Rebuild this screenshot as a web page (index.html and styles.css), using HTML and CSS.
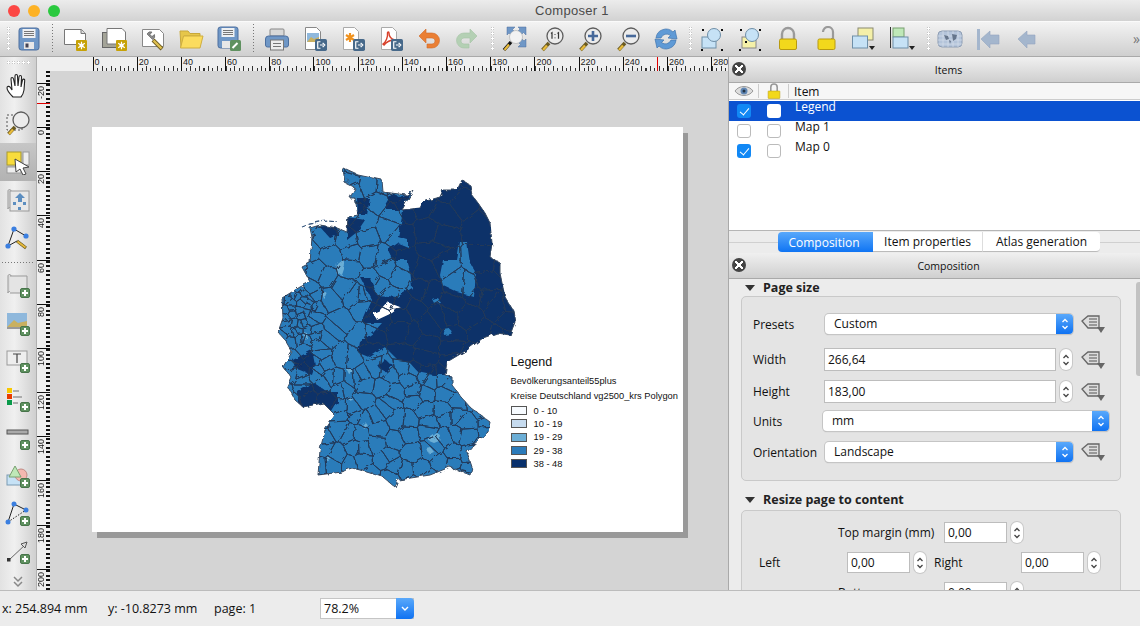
FILE: index.html
```html
<!DOCTYPE html>
<html lang="en">
<head>
  <meta charset="UTF-8">
  <title>Composer 1</title>
  <link rel="stylesheet" href="styles.css">
</head>
<body>

  <svg class="defs" width="0" height="0">
    <defs>
      <symbol id="plus" viewBox="0 0 10 10"><rect x=".5" y=".5" width="9" height="9" rx="1.5" fill="#5f9160" stroke="#47744a"/><path d="M5 2v6M2 5h6" stroke="#fff" stroke-width="2"/></symbol>
      <symbol id="gold" viewBox="0 0 10 10"><rect width="10" height="10" rx="1" fill="#c7a206"/><path d="M5 1.5v7M2 3l6 4M8 3L2 7" stroke="#fff" stroke-width="1.1"/><circle cx="5" cy="5" r="1.8" fill="#fff"/></symbol>
      <symbol id="export" viewBox="0 0 11 11"><rect width="11" height="11" rx="1.5" fill="#47698a"/><path d="M5 2.5H2.5v6H5M4.5 5.5h3M7 3.5l2 2-2 2" fill="none" stroke="#fff" stroke-width="1.1"/></symbol>
      <symbol id="mag" viewBox="0 0 26 26"><path d="M10 17L3.500 24" stroke="#6a5a20" stroke-width="3.600"/><path d="M8 19.500L4 24" stroke="#e8bb3c" stroke-width="2.400"/><circle cx="16" cy="10" r="8" fill="#ececec" stroke="#5d5d5d" stroke-width="1.300"/></symbol>
      <symbol id="lock" viewBox="0 0 26 26"><path d="M7 13V8a6 6 0 0 1 12 0v5" fill="none" stroke="#9a9a9a" stroke-width="2.400"/><rect x="4.500" y="13" width="17" height="10.500" rx="1.500" fill="#f2d81c" stroke="#b89a10"/></symbol>
      <symbol id="ddef" viewBox="0 0 26 22"><path d="M2 8l6-5h11v12H8z" fill="#ddd" stroke="#666" stroke-width="1.300"/><path d="M9 6h8M9 9h8M9 12h8" stroke="#555"/><path d="M17 14h8l-4 6z" fill="#666"/></symbol>
      <symbol id="updown" viewBox="0 0 12 20"><path d="M3.500 8L6 5.500 8.500 8M3.500 12L6 14.500 8.500 12" fill="none" stroke="currentColor" stroke-width="1.300"/></symbol>
    </defs>
  </svg>

  <div class="titlebar">
    <span class="light red"></span><span class="light amber"></span><span class="light green"></span>
    <span class="title">Composer 1</span>
  </div>

  <div class="toolbar">
    <span class="grip first"></span>
    <span class="tool"><svg class="ico" viewBox="0 0 26 26"><rect x="3" y="2" width="20" height="22" rx="2.500" fill="#6f97c6" stroke="#4c6f9f"/><rect x="6.500" y="3" width="13" height="9" fill="#eef0f2"/><path d="M8 5.500h10M8 7.500h10M8 9.500h10" stroke="#777"/><rect x="8" y="16" width="10" height="7" fill="#e8e8e8"/><rect x="9.500" y="17.500" width="3" height="4" fill="#445"/></svg></span>
    <span class="sep"></span>
    <span class="tool"><svg class="ico" viewBox="0 0 26 26"><path d="M2.500 3.500h17l4 4v11h-21z" fill="#fff" stroke="#777"/><path d="M19 3.500v4h4.500" fill="#ddd" stroke="#777"/><use href="#gold" x="14" y="14" width="11" height="11"/></svg></span>
    <span class="tool tool-dup"><svg class="ico" viewBox="0 0 26 26"><rect x="0.500" y="6.500" width="18" height="15" fill="#a4a498" stroke="#666"/><path d="M5 2.500h15l3.500 3.500v12H5z" fill="#fff" stroke="#777"/><use href="#gold" x="14" y="14" width="11" height="11"/></svg></span>
    <span class="tool"><svg class="ico" viewBox="0 0 26 26"><path d="M2.500 3.500h17l4 4v13h-21z" fill="#fff" stroke="#888"/><path d="M7 8a4 4 0 0 1 5-2l-2 2.500 2 2 2.500-2a4 4 0 0 1-2 5z" fill="#8a8a8a" stroke="#555" stroke-width=".6"/><path d="M13 14l9 9" stroke="#6a5a20" stroke-width="4"/><path d="M13.500 14.500l8 8" stroke="#e0c050" stroke-width="2.400"/></svg></span>
    <span class="tool"><svg class="ico" viewBox="0 0 26 26"><path d="M2 5h8l2 2.500h10V10H6L3 21.500z" fill="#e6c64a" stroke="#c8a83a"/><path d="M5.500 10H25l-3 12H2.500z" fill="#fbdc5e" stroke="#cfae40"/></svg></span>
    <span class="tool"><svg class="ico" viewBox="0 0 26 26"><rect x="2" y="1" width="20" height="21" rx="2.500" fill="#6f97c6" stroke="#4c6f9f"/><rect x="5.500" y="2" width="13" height="9" fill="#eef0f2"/><path d="M7 4.500h10M7 6.500h10M7 8.500h10" stroke="#777"/><rect x="6" y="15" width="9" height="7" fill="#e8e8e8"/><rect x="14" y="14" width="11" height="11" rx="1.500" fill="#5f9160"/><path d="M16.500 22l5-5" stroke="#fff" stroke-width="2"/></svg></span>
    <span class="sep sep-b"></span>
    <span class="tool"><svg class="ico" viewBox="0 0 26 26"><rect x="6" y="3" width="14" height="7" rx="1" fill="#d8d8d8" stroke="#888"/><path d="M1.500 13a3 3 0 0 1 3-3h17a3 3 0 0 1 3 3v6a2 2 0 0 1-2 2h-19a2 2 0 0 1-2-2z" fill="#6f97c6" stroke="#4c6f9f"/><rect x="6.500" y="14" width="13" height="10" fill="#eee" stroke="#777"/><path d="M9 17.500h8M9 20.500h8" stroke="#777"/></svg></span>
    <span class="tool"><svg class="ico" viewBox="0 0 26 26"><path d="M3.500 1.500h11l4 4v18h-15z" fill="#fff" stroke="#888"/><rect x="5" y="7" width="12" height="9" fill="#8fb8dc"/><path d="M5 16l4-5 3 2 5-2v5z" fill="#c9b060"/><use href="#export" x="13" y="13" width="12" height="12"/></svg></span>
    <span class="tool"><svg class="ico" viewBox="0 0 26 26"><path d="M3.500 1.500h11l4 4v18h-15z" fill="#fff" stroke="#aaa"/><path d="M10 7v9M6 9l8 5M14 9l-8 5" stroke="#f0921e" stroke-width="2.200"/><use href="#export" x="13" y="13" width="12" height="12"/></svg></span>
    <span class="tool"><svg class="ico" viewBox="0 0 26 26"><path d="M3.500 1.500h11l4 4v18h-15z" fill="#fff" stroke="#aaa"/><path d="M5 18c3-2 5-7 4.500-11 0-1.500 1.500-1 1.500 0 0 3 2 6 6 7-4 0-8 1-11 5z" fill="none" stroke="#d8402a" stroke-width="1.400"/><use href="#export" x="13" y="13" width="12" height="12"/></svg></span>
    <span class="tool"><svg class="ico" viewBox="0 0 26 26"><path d="M3 10l7-7v4h6a7 7 0 0 1 0 15h-5v-4h5a3 3 0 0 0 0-6h-6v5z" fill="#ea7f34" stroke="#d06a28" stroke-width=".6"/></svg></span>
    <span class="tool"><svg class="ico" viewBox="0 0 26 26"><path d="M23 10l-7-7v4h-6a7 7 0 0 0 0 15h5v-4h-5a3 3 0 0 1 0-6h6v5z" fill="#b4d0b4" stroke="#a5c2a5" stroke-width=".6"/></svg></span>
    <span class="grip"></span>
    <span class="tool"><svg class="ico" viewBox="0 0 26 26"><path d="M6 1h8l-2.500 2.500 2 2L10 9 8 7 6 9zM25 1v8l-2.500-2.500-2 2L17 5l2-2-2-2zM25 21h-8l2.500-2.500-2-2 3.500-3.500 2 2 2-2z" fill="#6f97c6" stroke="#4c6f9f" stroke-width=".5"/><circle cx="15" cy="11" r="6.500" fill="#f2f2f2" stroke="#aaa" stroke-width=".6"/><path d="M10 16L3 24" stroke="#111" stroke-width="3.400"/><path d="M8 18.500L3.500 24" stroke="#e8bb3c" stroke-width="2.200"/></svg></span>
    <span class="tool"><svg class="ico" viewBox="0 0 26 26"><use href="#mag" width="26" height="26"/><path d="M12 7.500l1-.8v6M18.500 7.500l1-.8v6" fill="none" stroke="#333" stroke-width="1.200"/><path d="M16 8v.8M16 11.500v.8" stroke="#333" stroke-width="1.200"/></svg></span>
    <span class="tool"><svg class="ico" viewBox="0 0 26 26"><use href="#mag" width="26" height="26"/><path d="M11 10h10M16 5v10" stroke="#47699a" stroke-width="2.600"/></svg></span>
    <span class="tool"><svg class="ico" viewBox="0 0 26 26"><use href="#mag" width="26" height="26"/><path d="M11 10h10" stroke="#47699a" stroke-width="2.600"/></svg></span>
    <span class="tool"><svg class="ico" viewBox="0 0 26 26"><path d="M3 12a10 10 0 0 1 17-6l2-2 2 9-9-1 2.500-2.500A6 6 0 0 0 8 12z" fill="#5f9ad6" stroke="#3f74ae" stroke-width=".7"/><path d="M23 14a10 10 0 0 1-17 6l-2 2-2-9 9 1-2.500 2.500A6 6 0 0 0 18 14z" fill="#5f9ad6" stroke="#3f74ae" stroke-width=".7"/></svg></span>
    <span class="grip grip-b"></span>
    <span class="tool"><svg class="ico" viewBox="0 0 26 26"><rect x="3" y="11" width="14" height="11" fill="#c6e2f6" stroke="#6f8fa8"/><circle cx="15" cy="9" r="6.500" fill="#c6e2f6" stroke="#6f8fa8"/><path d="M3 3h2v2H3zM22 3h2v2h-2zM2 23h2v2H2zM22 23h2v2h-2z" fill="#111"/></svg></span>
    <span class="tool"><svg class="ico" viewBox="0 0 26 26"><rect x="5" y="11" width="14" height="11" fill="#f4f0a8" stroke="#888"/><circle cx="15" cy="9" r="6.500" fill="#c6e2f6" stroke="#6f8fa8"/><path d="M3 3h2v2H3zM22 3h2v2h-2zM2 23h2v2H2zM22 23h2v2h-2z" fill="#111"/><rect x="8" y="15" width="2" height="2" fill="#111"/></svg></span>
    <span class="tool"><svg class="ico" viewBox="0 0 26 26"><use href="#lock" width="26" height="26"/></svg></span>
    <span class="tool"><svg class="ico" viewBox="0 0 26 26"><path d="M10 6a5 5 0 0 1 10 0v7h-2" fill="none" stroke="#9a9a9a" stroke-width="2.200"/><rect x="5" y="13" width="17" height="10.500" rx="1.500" fill="#f2d81c" stroke="#b89a10"/></svg></span>
    <span class="tool"><svg class="ico" viewBox="0 0 26 26"><rect x="7" y="2" width="15" height="12" fill="#f4f0a8" stroke="#8a8a70"/><rect x="1.500" y="10" width="15" height="12" fill="#c6e2f6" stroke="#6f8fa8"/><path d="M18 20h6l-3 4z" fill="#222"/></svg></span>
    <span class="tool"><svg class="ico" viewBox="0 0 26 26"><path d="M1.500 1v21" stroke="#333"/><rect x="4" y="2" width="11" height="9" fill="#bfe8b8" stroke="#78a070"/><rect x="4" y="11" width="15" height="11" fill="#c6e2f6" stroke="#6f8fa8"/><path d="M20 20h6l-3 4z" fill="#222"/></svg></span>
    <span class="grip grip-c"></span>
    <span class="tool"><svg class="ico ico-wide" viewBox="0 0 26 20"><rect x="1" y="2" width="24" height="16" rx="4" fill="#b4c4da" stroke="#8d9db4"/><path d="M1 7h24M1 11h24M1 15h24M6 2v16M11 2v16M16 2v16M21 2v16" stroke="#d5dfea" stroke-width=".7"/><path d="M7 6l4 1 1 3-3 1zM15 5l5 1-1 4-3 2zM12 11l2 1-1 3z" fill="#66768c"/></svg></span>
    <span class="tool"><svg class="ico" viewBox="0 0 26 26"><rect x="2" y="3" width="3" height="21" fill="#a4b6cd"/><path d="M6 13l9-8v4h9v9h-9v4z" fill="#a4b6cd" stroke="#93a6bf" stroke-width=".6"/></svg></span>
    <span class="tool"><svg class="ico" viewBox="0 0 26 26"><path d="M5 13l9-8v4h8v9h-8v4z" fill="#a4b6cd" stroke="#93a6bf" stroke-width=".6"/></svg></span>
    <span class="more">»</span>
  </div>

  <div class="main">
    <div class="side-tools">
      <span class="grip-h"></span>
      <span class="side-tool"><svg class="ico" viewBox="0 0 26 26"><path d="M8 24c-3-3-6-7-6-9 0-2 2-2 3-1l2 3-1-11c0-2 2-2 2.500 0L10 13l0-10c0-2 2.500-2 2.500 0l.5 10 1-9c.2-2 2.500-2 2.500 0l-.5 10 1.500-7c.5-1.500 2.500-1 2.200.5L19 17c-.5 3-1 5-3 7z" fill="#fff" stroke="#222" stroke-width="1.100"/></svg></span>
      <span class="side-tool"><svg class="ico" viewBox="0 0 26 26"><rect x="2" y="4" width="15" height="15" fill="none" stroke="#555" stroke-dasharray="2 2"/><use href="#mag" width="26" height="26" y="-1"/></svg></span>
      <span class="side-tool active"><svg class="ico" viewBox="0 0 26 26"><rect x="2" y="3" width="14" height="13" fill="#f8dc3c" stroke="#a89a30"/><rect x="18" y="3" width="6" height="13" fill="#eee" stroke="#999"/><rect x="2" y="18" width="14" height="6" fill="#eee" stroke="#999"/><path d="M10 10l14 8-6 1 3 6-3 1-3-6-4 3z" fill="#fff" stroke="#444"/></svg></span>
      <span class="side-tool"><svg class="ico" viewBox="0 0 26 26"><path d="M3 4c0-2 3-2 3 0v18c0-2-3-2-3 0z" fill="#ddd" stroke="#999"/><rect x="5" y="4" width="19" height="20" fill="#e8e8e8" stroke="#999"/><path d="M15 6l5 5h-3v4h-4v-4h-3z" fill="#5c8ec0"/><path d="M8 15h3v3H8zM18 15h3v3h-3zM13 20h3v3h-3z" fill="#5c8ec0"/></svg></span>
      <span class="side-tool"><svg class="ico" viewBox="0 0 26 26"><path d="M9 4L3 21M9 4l12 7M3 21l9-5" fill="none" stroke="#222"/><path d="M12 16l9 7" stroke="#6a5a20" stroke-width="3"/><path d="M12.500 16.500l8 6" stroke="#e8bb3c" stroke-width="1.800"/><circle cx="9" cy="4" r="2.600" fill="#3b7fe0"/><circle cx="21" cy="11" r="2.600" fill="#3b7fe0"/><circle cx="3" cy="21" r="2.600" fill="#3b7fe0"/></svg></span>
      <span class="dotted"></span>
      <span class="side-tool"><svg class="ico" viewBox="0 0 26 26"><path d="M3 3c0-2 3-2 3 0v17c0-2-3-2-3 0z" fill="#ddd" stroke="#999"/><path d="M5 3h17v17H5" fill="#e4e4e4" stroke="#999"/><use href="#plus" x="15" y="15" width="10" height="10"/></svg></span>
      <span class="side-tool"><svg class="ico" viewBox="0 0 26 26"><rect x="2" y="2" width="20" height="14" fill="#8fb8dc"/><path d="M2 16l7-7 4 3 9-2v6z" fill="#c9b060"/><rect x="2" y="16" width="20" height="2" fill="#999"/><use href="#plus" x="15" y="15" width="10" height="10"/></svg></span>
      <span class="side-tool"><svg class="ico" viewBox="0 0 26 26"><rect x="2" y="2" width="20" height="14" fill="#eee" stroke="#999"/><path d="M8 5h8M12 5v9" stroke="#444" stroke-width="1.200"/><use href="#plus" x="15" y="14" width="10" height="10"/></svg></span>
      <span class="side-tool"><svg class="ico" viewBox="0 0 26 26"><rect x="2" y="1" width="5" height="5" fill="#f8c800"/><rect x="2" y="7" width="5" height="5" fill="#e83c00"/><rect x="2" y="13" width="5" height="5" fill="#0a9a4a"/><path d="M8 4h6M8 10h9M8 16h5" stroke="#999" stroke-width="1.400"/><use href="#plus" x="15" y="15" width="10" height="10"/></svg></span>
      <span class="side-tool"><svg class="ico" viewBox="0 0 26 26"><rect x="2" y="5" width="21" height="4" fill="#aaa" stroke="#555"/><use href="#plus" x="15" y="15" width="10" height="10"/></svg></span>
      <span class="side-tool"><svg class="ico" viewBox="0 0 26 26"><rect x="2" y="12" width="15" height="10" fill="#c6e2f6" stroke="#7a9ab2"/><circle cx="16" cy="12" r="6" fill="#f4b8b0" stroke="#c08a84"/><path d="M10 3l6 11H4z" fill="#bfe8b8" stroke="#78a070"/><use href="#plus" x="15" y="15" width="10" height="10"/></svg></span>
      <span class="side-tool"><svg class="ico" viewBox="0 0 26 26"><path d="M9 3L3 21" stroke="#222"/><path d="M9 3l12 6" stroke="#222"/><path d="M3 21l18-12" stroke="#222" stroke-dasharray="1.500 1.500"/><circle cx="9" cy="3" r="2.500" fill="#3b7fe0"/><circle cx="21" cy="9" r="2.500" fill="#3b7fe0"/><circle cx="3" cy="21" r="2.500" fill="#3b7fe0"/><use href="#plus" x="15" y="15" width="10" height="10"/></svg></span>
      <span class="side-tool"><svg class="ico" viewBox="0 0 26 26"><path d="M4 21L21 5" stroke="#666"/><path d="M16 5l6-2-2 6z" fill="#ddd" stroke="#555"/><rect x="2" y="19" width="3.500" height="3.500" fill="#333"/><use href="#plus" x="15" y="15" width="10" height="10"/></svg></span>
      <span class="chevrons"><svg width="12" height="12" viewBox="0 0 12 12"><path d="M2 1l4 4 4-4M2 6l4 4 4-4" fill="none" stroke="#888" stroke-width="1.500"/></svg></span>
    </div>

    <div class="work">
      <div class="ruler-top">
        <span class="ruler-corner"></span>
        <div class="ruler-h" id="rulerH"><span class="ruler-mark"></span></div>
      </div>
      <div class="work-body">
        <div class="ruler-v" id="rulerV"><span class="ruler-mark-v"></span></div>
        <div class="canvas">
          <div class="page">
            <svg class="map" viewBox="92 127 591 405" width="591" height="405">
              <defs>
                <clipPath id="germany"><path id="outlinePath" d="M343 168L347 170 358 175 382 180 383 192 407 195 413 190 402 210 420 208 423 202 440 197 443 190 457 190 462 180 470 185 472 195 478 203 485 213 490 223 492 243 490 257 500 263 500 273 502 283 505 297 513 310 515 322 510 335 497 333 483 338 467 350 447 362 445 375 452 377 452 385 462 398 470 407 490 422 488 432 473 445 467 452 472 467 470 475 450 467 430 475 398 480 395 487 383 477 360 470 352 468 346 470 342 472 318 475 320 450 325 430 335 415 323 403 303 407 295 400 288 387 292 378 283 367 292 352 285 340 278 332 283 318 282 298 300 287 310 282 302 267 310 263 312 237 310 228 320 225 337 228 347 232 348 217 358 215 355 198 350 198 355 188 345 183z"/></clipPath>
                <filter id="rough" x="-5%" y="-5%" width="110%" height="110%">
                  <feTurbulence type="fractalNoise" baseFrequency="0.16" numOctaves="2" seed="4" result="noise"/>
                  <feDisplacementMap in="SourceGraphic" in2="noise" scale="5"/>
                  <feGaussianBlur stdDeviation="0.3"/>
                </filter>
              </defs>
              <g filter="url(#rough)">
                <use href="#outlinePath" fill="#2b7bba"/>
                <g clip-path="url(#germany)">
                  <path fill="#0a3069" d="M403 212L402 205 420 195 440 185 470 170 520 220 530 340 470 352 447 362 445 375 433 375 418 372 410 363 398 360 385 347 370 357 358 352 360 342 373 333 382 323 362 323 372 300 360 277 370 277 377 295 397 297 412 288 410 270 407 260 393 260 388 250 398 243 408 247 408 240 398 237z"/>
                  <path fill="#0a3069" d="M320 227L337 223 338 235 330 238zM347 217L365 220 357 232 347 240zM357 198L370 198 367 215 358 215zM385 205L392 193 400 197 410 192 402 210 387 210zM293 360L312 350 315 365 312 375 295 368zM298 392L313 382 327 392 338 392 338 402 330 415 318 407 298 407zM378 367L385 360 393 365 387 372z"/>
                  <path fill="#2b7bba" d="M460 242L467 242 470 263 476 273 474 297 457 292 442 285 440 275 443 260 457 260z"/>
                  <path fill="#2b7bba" d="M433 300l5-2 3 5-6 1zM444 330l6-1 2 6-7 1zM473 348l8-3 1 6-8 1z"/>
                  <path fill="#6baed6" d="M337 263L343 258 345 266 342 275 336 273zM322 293l4-1 1 4-3 3zM303 332l4 1 1 6-4 1zM430 436l6-4 4 3-1 6-5 2-5-2zM427 449l4-1 3 4-5 2zM362 425l3-3 3 4-4 3zM347 370l4-2 3 3-5 3zM348 398l3-1 2 3-4 1zM326 457l3-1 1 3-4 1z"/>
                  <path fill="#fff" d="M373 313L380 310 387 302 400 307 392 313 377 320z"/>
                  <path id="kreise" fill="none" stroke="#233a5a" stroke-width="1"/>
                </g>
                <use href="#outlinePath" fill="none" stroke="#3b4b61" stroke-width="1"/>
                <path d="M302 227l8-3 10-2 8-1 10 1" fill="none" stroke="#3b5a80" stroke-width="1.300" stroke-dasharray="5 2"/>
                <circle cx="347" cy="181" r="2" fill="#2b7bba" stroke="#3b4b61" stroke-width=".6"/>
              </g>
            </svg>
            <div class="legend">
              <div class="legend-title">Legend</div>
              <div class="legend-sub">Bevölkerungsanteil55plus</div>
              <div class="legend-sub">Kreise Deutschland vg2500_krs Polygon</div>
              <div class="legend-row"><span class="swatch s1"></span>0 - 10</div>
              <div class="legend-row"><span class="swatch s2"></span>10 - 19</div>
              <div class="legend-row"><span class="swatch s3"></span>19 - 29</div>
              <div class="legend-row"><span class="swatch s4"></span>29 - 38</div>
              <div class="legend-row"><span class="swatch s5"></span>38 - 48</div>
            </div>
          </div>
        </div>
      </div>
    </div>

    <div class="dock">
      <div class="dock-title"><span class="close"></span>Items</div>
      <div class="tree-head">
        <span class="head-cell">
          <svg width="20" height="12" viewBox="0 0 20 12"><path d="M1 6c4-6 14-6 18 0-4 6-14 6-18 0z" fill="#ddd" stroke="#999"/><circle cx="10" cy="6" r="3.500" fill="#5f86b4"/><circle cx="10" cy="6" r="1.500" fill="#234"/></svg>
        </span>
        <span class="head-cell">
          <svg width="14" height="16" viewBox="0 0 26 30"><path d="M7 15V8a6 6 0 0 1 12 0v7" fill="none" stroke="#999" stroke-width="3"/><rect x="2" y="15" width="22" height="14" rx="1" fill="#f2d81c" stroke="#b89a10"/></svg>
        </span>
        <span class="head-item">Item</span>
      </div>
      <div class="tree">
        <div class="tree-row selected"><span class="check on"></span><span class="check white"></span><span class="tree-text">Legend</span></div>
        <div class="tree-row"><span class="check"></span><span class="check"></span><span class="tree-text">Map 1</span></div>
        <div class="tree-row"><span class="check on"></span><span class="check"></span><span class="tree-text">Map 0</span></div>
      </div>
      <div class="tabs">
        <span class="tab current">Composition</span>
        <span class="tab tab-props">Item properties</span>
        <span class="tab tab-atlas">Atlas generation</span>
      </div>
      <div class="dock-title comp-title"><span class="close"></span>Composition</div>
      <div class="comp-scroll">
        <div class="scrollbar"></div>
        <div class="section-head"><span class="tri"></span>Page size</div>
        <div class="group group-page">
          <div class="row row-presets">
            <span class="row-label">Presets</span>
            <span class="combo">Custom<span class="combo-btn"><svg width="12" height="20"><use href="#updown" width="12" height="20"/></svg></span></span>
            <svg class="ddef" width="26" height="22"><use href="#ddef" width="26" height="22"/></svg>
          </div>
          <div class="row row-width">
            <span class="row-label">Width</span>
            <span class="input wide">266,64</span>
            <span class="spin"><svg width="12" height="20"><use href="#updown" width="12" height="20"/></svg></span>
            <svg class="ddef" width="26" height="22"><use href="#ddef" width="26" height="22"/></svg>
          </div>
          <div class="row row-height">
            <span class="row-label">Height</span>
            <span class="input wide">183,00</span>
            <span class="spin"><svg width="12" height="20"><use href="#updown" width="12" height="20"/></svg></span>
            <svg class="ddef" width="26" height="22"><use href="#ddef" width="26" height="22"/></svg>
          </div>
          <div class="row row-units">
            <span class="row-label">Units</span>
            <span class="combo combo-full">mm<span class="combo-btn"><svg width="12" height="20"><use href="#updown" width="12" height="20"/></svg></span></span>
          </div>
          <div class="row row-orient">
            <span class="row-label">Orientation</span>
            <span class="combo">Landscape<span class="combo-btn"><svg width="12" height="20"><use href="#updown" width="12" height="20"/></svg></span></span>
            <svg class="ddef" width="26" height="22"><use href="#ddef" width="26" height="22"/></svg>
          </div>
        </div>
        <div class="section-head section-b"><span class="tri"></span>Resize page to content</div>
        <div class="group group-resize">
          <div class="row margin-row">
            <span class="margin-label-top">Top margin (mm)</span>
            <span class="input small">0,00</span>
            <span class="spin"><svg width="12" height="20"><use href="#updown" width="12" height="20"/></svg></span>
          </div>
          <div class="row margin-row margin-mid">
            <span class="margin-label-left">Left</span>
            <span class="input small">0,00</span>
            <span class="spin"><svg width="12" height="20"><use href="#updown" width="12" height="20"/></svg></span>
            <span class="margin-label-right">Right</span>
            <span class="input small">0,00</span>
            <span class="spin"><svg width="12" height="20"><use href="#updown" width="12" height="20"/></svg></span>
          </div>
          <div class="row margin-row margin-last">
            <span class="margin-label-top">Bottom</span>
            <span class="input small">0,00</span>
            <span class="spin"><svg width="12" height="20"><use href="#updown" width="12" height="20"/></svg></span>
          </div>
        </div>
      </div>
    </div>
  </div>

  <div class="statusbar">
    <span class="stat stat-x">x: 254.894 mm</span>
    <span class="stat stat-y">y: -10.8273 mm</span>
    <span class="stat stat-page">page: 1</span>
    <span class="zoom-combo">78.2%<span class="zoom-btn"><svg width="10" height="8" viewBox="0 0 10 8"><path d="M2 2l3 3 3-3" fill="none" stroke="#fff" stroke-width="1.400"/></svg></span></span>
  </div>

  <script src="map.js"></script>
</body>
</html>
```

FILE: styles.css
```css
* {
  box-sizing: border-box;
}
html, body {
  margin: 0;
  height: 626px;
  overflow: hidden;
}
body {
  width: 1140px;
  font-family: "Open Sans", sans-serif;
  font-size: 12px;
  color: #111;
  background: #ececec;
}
.defs {
  position: absolute;
}
.ico {
  width: 26px;
  height: 26px;
  display: block;
}
.ico-wide {
  width: 26px;
  height: 20px;
}

/* window title */
.titlebar {
  height: 21px;
  display: flex;
  align-items: center;
  padding-left: 8px;
  gap: 8px;
  background: linear-gradient(#ececec, #d2d2d2);
  position: relative;
}
.light {
  width: 12px;
  height: 12px;
  border-radius: 50%;
}
.red { background: #fc4744; }
.amber { background: #fdb225; }
.green { background: #2ac93f; }
.title {
  position: absolute;
  left: 4px;
  right: 0;
  text-align: center;
  font-family: "Liberation Sans", sans-serif;
  font-size: 13px;
  letter-spacing: 0.3px;
  color: #4a4a4a;
}

/* top toolbar */
.toolbar {
  height: 36px;
  display: flex;
  align-items: center;
  padding-left: 7px;
  background: linear-gradient(#f3f3f3, #cfcfcf);
  border-top: 1px solid #fafafa;
  border-bottom: 1px solid #a9a9a9;
  position: relative;
}
.tool {
  width: 38px;
  height: 34px;
  flex: none;
  display: flex;
  align-items: center;
  justify-content: center;
}
.tool-dup {
  margin-left: 2px;
}
.grip {
  width: 9px;
  height: 26px;
  flex: none;
  background: radial-gradient(circle, #fff 1px, #bbb 1.5px, transparent 2px) right top / 5px 5px repeat-y;
}
.grip.first {
  width: 3px;
  background-position: left top;
  background-size: 3px 5px;
}
.grip-b { width: 8px; }
.grip-c { width: 10px; }
.sep {
  width: 8px;
  height: 30px;
  flex: none;
  background: repeating-linear-gradient(#777 0 1px, transparent 1px 3px) center / 1px 100% no-repeat;
}
.sep-b { width: 10px; }
.more {
  position: absolute;
  right: 0;
  top: 7px;
  font-size: 14px;
  color: #777;
}

/* main area */
.main {
  display: flex;
  height: 533px;
}
.side-tools {
  width: 37px;
  flex: none;
  display: flex;
  flex-direction: column;
  align-items: center;
  background: linear-gradient(90deg, #e2e2e2, #f0f0f0 40%, #cfcfcf);
  border-right: 1px solid #b0b0b0;
}
.grip-h {
  width: 24px;
  height: 10px;
  flex: none;
  background: radial-gradient(circle, #fff 1px, #bbb 1.5px, transparent 2px) left center / 5px 5px repeat-x;
}
.side-tool {
  width: 36px;
  height: 38px;
  flex: none;
  display: flex;
  align-items: center;
  justify-content: center;
}
.side-tool.active {
  background: linear-gradient(#c6c6c6, #b2b2b2);
}
.dotted {
  width: 32px;
  height: 10px;
  flex: none;
  background: repeating-linear-gradient(90deg, #777 0 1px, transparent 1px 3px) center / 100% 1px no-repeat;
}
.chevrons {
  margin-top: 4px;
}

/* rulers and page */
.work {
  width: 691px;
  flex: none;
  display: flex;
  flex-direction: column;
}
.ruler-top {
  height: 14px;
  flex: none;
  display: flex;
  background: #efefef;
  font-family: "Liberation Sans", sans-serif;
  font-size: 9px;
  color: #222;
}
.ruler-corner {
  width: 13px;
  flex: none;
}
.ruler-h {
  flex: 1;
  position: relative;
  overflow: hidden;
  display: flex;
  padding-left: 42.500px;
  background-image:
    repeating-linear-gradient(90deg, #333 0 1px, transparent 1px 8.840px),
    repeating-linear-gradient(90deg, #333 0 1px, transparent 1px 4.420px);
  background-size: 100% 5px, 100% 3px;
  background-position: 42.500px bottom, 42.500px bottom;
  background-repeat: no-repeat;
}
.ruler-cell {
  width: 44.200px;
  flex: none;
  height: 14px;
  padding-left: 1px;
  line-height: 10px;
  border-left: 1px solid #111;
}
.ruler-cell:last-of-type {
  width: 16px;
}
.ruler-mark {
  position: absolute;
  left: 607px;
  top: 0;
  bottom: 0;
  width: 1px;
  background: #e00000;
}
.work-body {
  flex: 1;
  display: flex;
  min-height: 0;
}
.ruler-v {
  width: 13px;
  flex: none;
  position: relative;
  overflow: hidden;
  padding-top: 11.800px;
  font-family: "Liberation Sans", sans-serif;
  font-size: 9px;
  color: #222;
  background-color: #efefef;
  background-image: repeating-linear-gradient(#111 0 2px, transparent 2px 4.420px);
  background-size: 4px 100%;
  background-position: right top;
  background-repeat: no-repeat;
}
.ruler-vcell {
  height: 44.200px;
  border-top: 1px solid #111;
  display: flex;
  justify-content: flex-start;
  align-items: flex-start;
}
.ruler-vcell span {
  writing-mode: vertical-rl;
  transform: rotate(180deg);
  line-height: 9px;
  margin-top: 2px;
}
.ruler-mark-v {
  position: absolute;
  left: 0;
  right: 0;
  top: 32px;
  height: 1px;
  background: #e00000;
}
.canvas {
  flex: 1;
  background: #d4d4d4;
  padding: 56px 0 0 42px;
  overflow: hidden;
}
.page {
  width: 591px;
  height: 405px;
  background: #fff;
  box-shadow: 5px 6px 0 #999;
  position: relative;
}
.map {
  display: block;
}
.legend {
  position: absolute;
  left: 418.500px;
  top: 227px;
  font-family: "Liberation Sans", sans-serif;
  font-size: 9.300px;
  color: #111;
}
.legend-title {
  font-size: 12.500px;
  line-height: 16px;
  margin-bottom: 4px;
}
.legend-sub {
  line-height: 15px;
  white-space: nowrap;
}
.legend-row {
  height: 13.300px;
  display: flex;
  align-items: center;
  gap: 7px;
}
.swatch {
  width: 16px;
  height: 9px;
  border: 1px solid #555;
}
.s1 { background: #f7fbff; }
.s2 { background: #c6dbef; }
.s3 { background: #6baed6; }
.s4 { background: #2b7bba; }
.s5 { background: #08306b; }

/* right dock */
.dock {
  width: 412px;
  flex: none;
  display: flex;
  flex-direction: column;
  border-left: 1px solid #a9a9a9;
}
.dock-title {
  height: 26px;
  flex: none;
  display: flex;
  align-items: center;
  justify-content: center;
  padding-left: 28px;
  font-size: 10.500px;
  background: linear-gradient(#f0f0f0, #cfcfcf);
  border-bottom: 1px solid #a9a9a9;
  position: relative;
}
.close {
  position: absolute;
  left: 3px;
  top: 5px;
  width: 14px;
  height: 14px;
  border-radius: 50%;
  background:
    linear-gradient(45deg, transparent 43%, #fff 43% 57%, transparent 57%) center / 8px 8px no-repeat,
    linear-gradient(-45deg, transparent 43%, #fff 43% 57%, transparent 57%) center / 8px 8px no-repeat,
    #444;
}
.tree-head {
  height: 17px;
  flex: none;
  display: flex;
  align-items: center;
  background: #f6f6f6;
  border-bottom: 1px solid #ccc;
}
.head-cell {
  width: 30px;
  height: 14px;
  display: flex;
  align-items: center;
  justify-content: center;
  border-right: 1px solid #ccc;
}
.head-item {
  padding-left: 5px;
}
.tree {
  height: 130px;
  flex: none;
  padding-top: 1px;
  background: #fff;
}
.tree-row {
  height: 20px;
  display: flex;
  padding: 3px 0 0 8px;
}
.selected {
  background: #0b52d1;
  color: #fff;
}
.check {
  width: 14px;
  height: 14px;
  margin-right: 16px;
  flex: none;
  background: #fff;
  border: 1px solid #bbb;
  border-radius: 3px;
}
.check.on {
  border: 0;
  background: #1188f5;
  position: relative;
}
.check.on::after {
  content: "";
  position: absolute;
  left: 5px;
  top: 2px;
  width: 4px;
  height: 8px;
  border: solid #fff;
  border-width: 0 1.500px 1.500px 0;
  transform: rotate(40deg);
}
.check.white {
  border: 0;
}
.tree-text {
  margin-left: -2px;
  margin-top: -5px;
  line-height: 16px;
}
.tabs {
  height: 23px;
  flex: none;
  display: flex;
  align-items: flex-end;
  padding: 0 0 1px 49px;
  border-top: 1px solid #b5b5b5;
  background: linear-gradient(#ececec 0 11px, #d0d0d0 11px 12px, #ececec 12px);
}
.tab {
  height: 20px;
  width: 95px;
  display: flex;
  align-items: center;
  justify-content: center;
  background: #fff;
  border-bottom: 1px solid #bbb;
}
.tab.current {
  color: #fff;
  padding-right: 3px;
  background: linear-gradient(#58a8fb, #0f74f3);
  border: 0;
  border-radius: 4px 0 0 4px;
}
.tab-props {
  width: 110px;
  border-right: 1px solid #ddd;
}
.tab-atlas {
  width: 117px;
  border-radius: 0 4px 4px 0;
}
.comp-scroll {
  flex: 1;
  overflow: hidden;
  position: relative;
  padding: 0 19px 0 12px;
  min-height: 0;
}
.scrollbar {
  position: absolute;
  right: 0;
  top: 3px;
  width: 4px;
  height: 94px;
  background: #c2c2c2;
  border-radius: 3px 0 0 3px;
}
.section-head {
  height: 17px;
  display: flex;
  align-items: center;
  font-weight: 700;
  font-size: 12.500px;
  color: #222;
}
.section-b {
  height: 29px;
  padding-top: 8px;
}
.tri {
  width: 0;
  height: 0;
  margin: 1px 8px 0 4px;
  border-style: solid;
  border-width: 6px 5.500px 0;
  border-color: #333 transparent transparent;
}
.group {
  background: #e4e4e4;
  border: 1px solid #c9c9c9;
  border-radius: 5px;
}
.group-page {
  height: 185px;
  padding: 16px 0 0 11px;
}
.group-resize {
  height: 120px;
  padding-top: 11px;
}
.row {
  display: flex;
  align-items: center;
}
.row-label {
  width: 71px;
  flex: none;
}
.row-width { margin-top: 13px; }
.row-height { margin-top: 9px; }
.row-units { margin-top: 8px; }
.row-orient { margin-top: 10px; }
.combo {
  width: 248px;
  height: 20px;
  margin-left: 1px;
  flex: none;
  display: flex;
  align-items: center;
  justify-content: space-between;
  padding-left: 9px;
  padding-bottom: 2px;
  background: #fff;
  border-radius: 4px;
  box-shadow: 0 0 0 1px #c5c5c5, 0 1px 1px #aaa;
  position: relative;
}
.combo-full {
  width: 286px;
  margin-left: -1px;
}
.combo-btn {
  position: absolute;
  right: 0;
  top: 0;
  width: 17px;
  height: 20px;
  color: #fff;
  display: flex;
  align-items: center;
  justify-content: center;
  background: linear-gradient(#5aa9fb, #0f72f2);
  border-radius: 0 4px 4px 0;
}
.ddef {
  margin-left: 7px;
  flex: none;
}
.input {
  height: 23px;
  flex: none;
  display: flex;
  align-items: center;
  padding-left: 3px;
  background: #fff;
  border: 1px solid #bdbdbd;
}
.input.wide { width: 232px; }
.input.small {
  width: 63px;
  height: 21px;
}
.spin {
  width: 12px;
  height: 21px;
  margin-left: 4px;
  flex: none;
  color: #444;
  background: #fff;
  border-radius: 6px;
  box-shadow: 0 0 0 1px #c8c8c8;
  display: flex;
  align-items: center;
  justify-content: center;
}
.row-width .ddef, .row-height .ddef {
  margin-left: 8px;
}
.margin-row {
  height: 21px;
}
.margin-mid { margin-top: 9px; }
.margin-last { margin-top: 9px; }
.margin-label-top {
  width: 106px;
  margin-left: 96px;
  flex: none;
}
.margin-label-left {
  width: 88px;
  margin-left: 17px;
  flex: none;
}
.margin-label-right {
  width: 87px;
  margin-left: 8px;
  flex: none;
}

/* status */
.statusbar {
  height: 36px;
  display: flex;
  align-items: center;
  border-top: 1px solid #bcbcbc;
  background: #ececec;
  padding-left: 2px;
  font-size: 12.500px;
}
.stat {
  flex: none;
  white-space: nowrap;
}
.stat-x { width: 106px; }
.stat-y { width: 106px; }
.stat-page { width: 106px; }
.zoom-combo {
  width: 94px;
  height: 21px;
  display: flex;
  align-items: center;
  padding-left: 3px;
  background: #fff;
  border: 1px solid #c5c5c5;
  position: relative;
}
.zoom-btn {
  position: absolute;
  right: -1px;
  top: -1px;
  width: 18px;
  height: 21px;
  display: flex;
  align-items: center;
  justify-content: center;
  background: linear-gradient(#5aa9fb, #0f72f2);
  border-radius: 0 4px 4px 0;
}
```

FILE: map.js
```js
// ruler labels
const rulerH = document.getElementById('rulerH');
for (let mm = 0; mm <= 280; mm += 20) {
  const cell = document.createElement('span');
  cell.className = 'ruler-cell';
  cell.textContent = mm;
  rulerH.appendChild(cell);
}
const rulerV = document.getElementById('rulerV');
for (let mm = -20; mm <= 200; mm += 20) {
  const cell = document.createElement('div');
  cell.className = 'ruler-vcell';
  cell.innerHTML = '<span>' + mm + '</span>';
  rulerV.appendChild(cell);
}

// district borders: voronoi cells from jittered seed points
let seed = 11;
function rnd() {
  seed = (seed * 16807) % 2147483647;
  return seed / 2147483647 - 0.5;
}

const points = [];
function scatter(x0, y0, x1, y1, s) {
  for (let y = y0; y < y1; y += s) {
    for (let x = x0; x < x1; x += s) {
      points.push([x + rnd() * s * 0.9, y + rnd() * s * 0.9]);
    }
  }
}
scatter(400, 160, 520, 300, 24);   // north east, big districts
scatter(275, 160, 400, 295, 19);
scatter(320, 295, 520, 375, 19);
scatter(275, 340, 320, 375, 14);
scatter(275, 375, 500, 490, 15);
scatter(285, 295, 320, 340, 7);    // Ruhr area

function clip(poly, a, b) {
  // keep the side of the bisector of a and b that holds a
  const mx = (a[0] + b[0]) / 2, my = (a[1] + b[1]) / 2;
  const nx = b[0] - a[0], ny = b[1] - a[1];
  const out = [];
  for (let i = 0; i < poly.length; i++) {
    const p = poly[i], q = poly[(i + 1) % poly.length];
    const dp = (p[0] - mx) * nx + (p[1] - my) * ny;
    const dq = (q[0] - mx) * nx + (q[1] - my) * ny;
    if (dp <= 0) out.push(p);
    if (dp * dq < 0) {
      const t = dp / (dp - dq);
      out.push([p[0] + (q[0] - p[0]) * t, p[1] + (q[1] - p[1]) * t]);
    }
  }
  return out;
}

let d = '';
points.forEach((a) => {
  let cell = [[260, 150], [530, 150], [530, 500], [260, 500]];
  points.forEach((b) => {
    if (a !== b && cell.length) cell = clip(cell, a, b);
  });
  if (cell.length) {
    d += 'M' + cell.map((p) => p[0].toFixed(1) + ' ' + p[1].toFixed(1)).join('L') + 'z';
  }
});
document.getElementById('kreise').setAttribute('d', d);
```
